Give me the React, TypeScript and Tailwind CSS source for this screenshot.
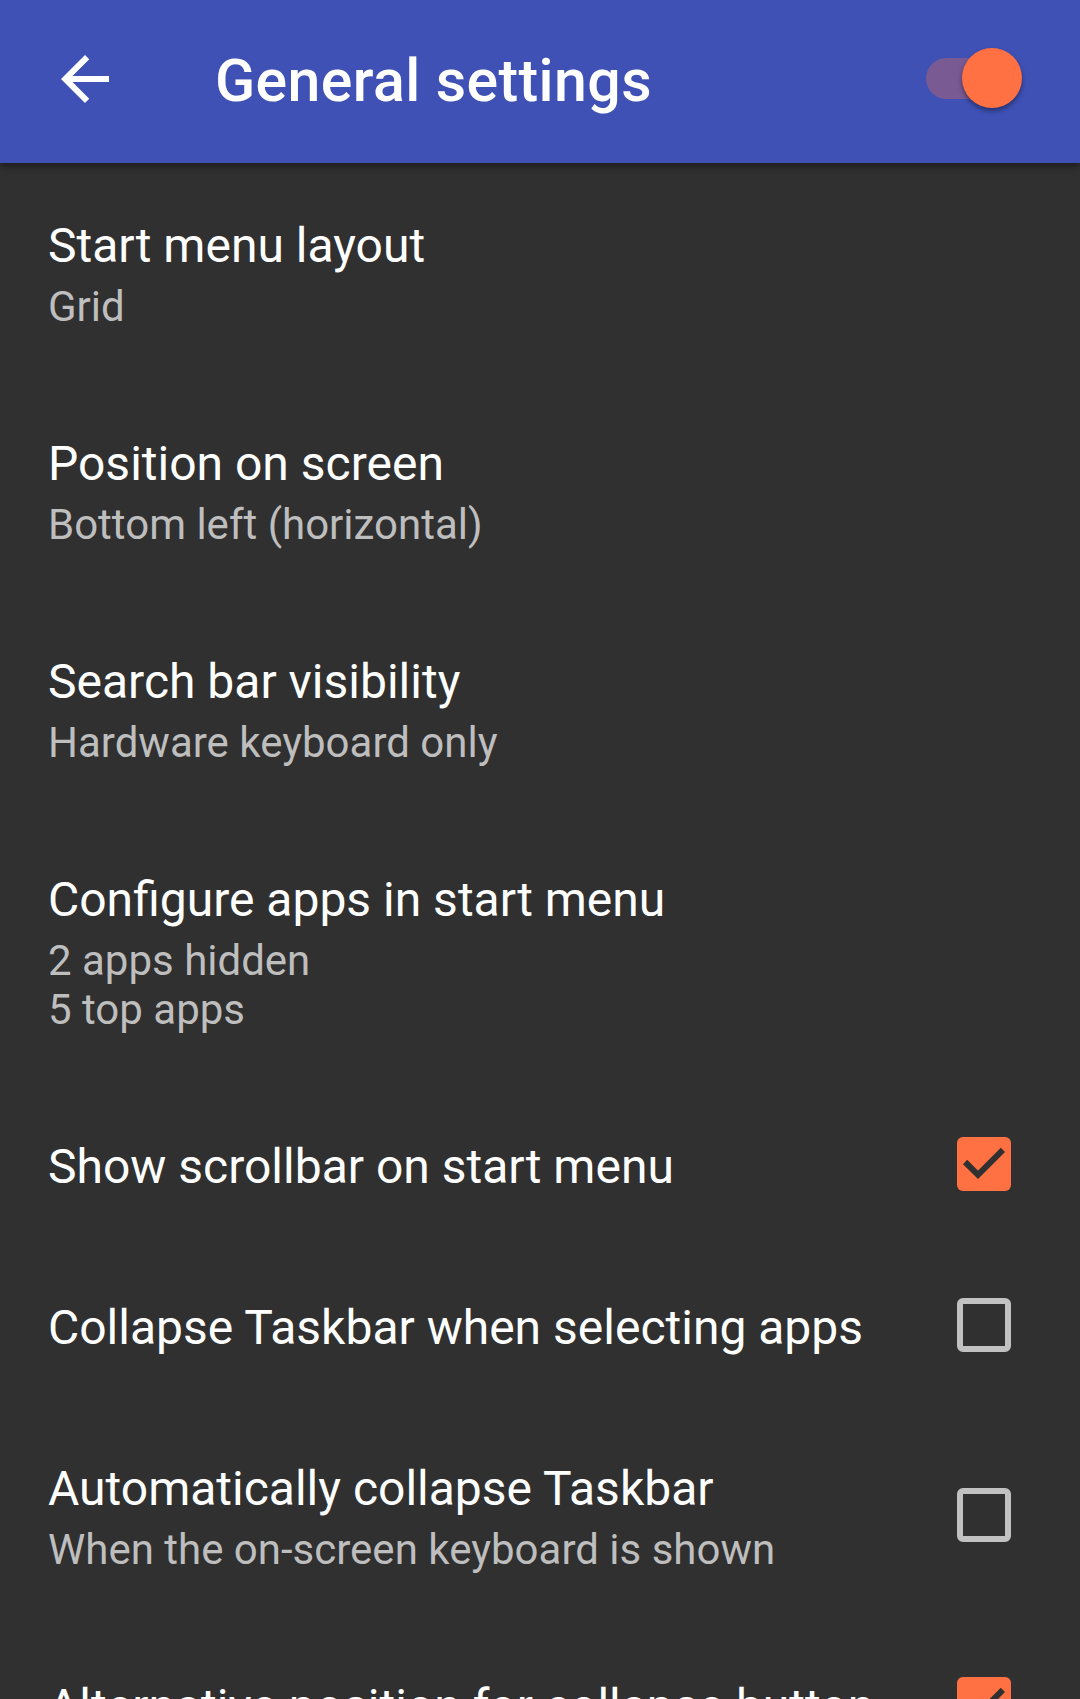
import { ReactNode } from 'react';

type Pref = {
  title: string;
  summary?: string[];
  checkbox?: boolean;
};

const prefs: Pref[] = [
  { title: 'Start menu layout', summary: ['Grid'] },
  { title: 'Position on screen', summary: ['Bottom left (horizontal)'] },
  { title: 'Search bar visibility', summary: ['Hardware keyboard only'] },
  { title: 'Configure apps in start menu', summary: ['2 apps hidden', '5 top apps'] },
  { title: 'Show scrollbar on start menu', checkbox: true },
  { title: 'Collapse Taskbar when selecting apps', checkbox: false },
  {
    title: 'Automatically collapse Taskbar',
    summary: ['When the on-screen keyboard is shown'],
    checkbox: false,
  },
  { title: 'Alternative position for collapse button', checkbox: true },
];

function CheckBox({ checked }: { checked: boolean }) {
  if (checked) {
    return (
      <div className="w-[54px] h-[54px] rounded-[6px] bg-[#FF7043] shrink-0 -mt-[6px]">
        <svg width="54" height="54" viewBox="0 0 54 54" fill="none">
          <polyline
            points="8.1,25 21,37.8 45.9,12.9"
            stroke="#303030"
            strokeWidth={6}
            strokeLinejoin="miter"
          />
        </svg>
      </div>
    );
  }
  return (
    <div className="w-[54px] h-[54px] rounded-[6px] border-[6px] border-[#C1C1C1] shrink-0 -mt-[6px]" />
  );
}

function PrefRow({ pref }: { pref: Pref }): ReactNode {
  return (
    <div className="flex items-center pl-12 pr-[69px] pt-[53px] pb-[52px]">
      <div className="flex-1 min-w-0">
        <div className="text-[48px] leading-[56px] text-white whitespace-nowrap">{pref.title}</div>
        {pref.summary && (
          <div className="mt-2">
            {pref.summary.map((line) => (
              <div key={line} className="text-[42px] leading-[49px] text-[#BEBEBE] whitespace-nowrap">
                {line}
              </div>
            ))}
          </div>
        )}
      </div>
      {pref.checkbox !== undefined && <CheckBox checked={pref.checkbox} />}
    </div>
  );
}

export default function App() {
  return (
    <div
      className="w-[1080px] h-[1699px] overflow-hidden bg-[#303030] flex flex-col"
      style={{ fontFamily: 'Roboto, "Noto Sans", sans-serif' }}
    >
      {/* toolbar */}
      <div className="relative z-10 h-[163px] shrink-0 bg-[#3F51B5] flex items-center pl-[49px] pr-[58px] shadow-[0_3px_8px_rgba(0,0,0,0.45)]">
        <svg width="72" height="72" viewBox="0 0 24 24" className="-mt-[5px] shrink-0" fill="white">
          <path d="M20 11H7.83l5.59-5.59L12 4l-8 8 8 8 1.41-1.41L7.83 13H20v-2z" />
        </svg>
        <h1 className="ml-[94px] flex-1 text-[59px] font-medium text-white tracking-[0.4px]">
          General settings
        </h1>
        {/* master switch */}
        <div className="relative w-[96px] h-[60px] -mt-[7px] shrink-0">
          <div className="absolute left-0 top-[10px] w-[84px] h-[41px] rounded-full bg-[#795A93]" />
          <div className="absolute right-0 top-0 w-[60px] h-[60px] rounded-full bg-[#FF7043] shadow-[0_3px_5px_rgba(0,0,0,0.4)]" />
        </div>
      </div>

      <div className="pt-[2px]">
        {prefs.map((p) => (
          <PrefRow key={p.title} pref={p} />
        ))}
      </div>
    </div>
  );
}
